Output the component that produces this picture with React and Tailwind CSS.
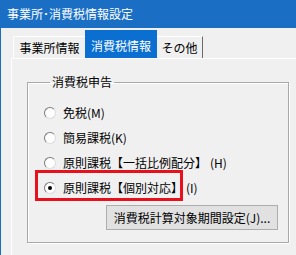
const Radio = ({ checked }) => (
  <span className="w-[12px] h-[12px] rounded-full bg-white border border-t-[#7a7a7a] border-l-[#7a7a7a] border-r-[#dcdcdc] border-b-[#dcdcdc] flex items-center justify-center shrink-0">
    {checked && <span className="w-[4px] h-[4px] rounded-full bg-black" />}
  </span>
);

const options = [
  { label: '免税(M)' },
  { label: '簡易課税(K)' },
  { label: '原則課税【一括比例配分】', key: '(H)' },
  { label: '原則課税【個別対応】', key: '(I)', checked: true, marked: true },
];

export default function App() {
  return (
    <div
      className="w-[296px] h-[255px] overflow-hidden bg-[#f0f0f0] border-l border-[#1a6fc4] text-black text-[12px] leading-[14px]"
      style={{ fontFamily: '"Noto Sans CJK JP", "Noto Sans", sans-serif' }}
    >
      {/* Title bar */}
      <div className="h-[28px] bg-[#1a6fc4] text-white flex items-center pl-[6px] text-[12px]">
        事業所･消費税情報設定
      </div>

      {/* Tabs */}
      <div className="flex items-end h-[30px] ml-[12px]">
        <div className="w-[72px] h-[22px] flex items-center justify-center border-t border-l border-white bg-[#f0f0f0]">
          事業所情報
        </div>
        <div className="w-[72px] h-[28px] flex items-end justify-center pb-[5px] bg-[#0a6fd0] text-white">
          消費税情報
        </div>
        <div className="w-[46px] h-[22px] flex items-center justify-center border-t border-white border-r border-r-[#696969] bg-[#f0f0f0]">
          その他
        </div>
      </div>

      {/* Tab panel */}
      <div className="ml-[10px] w-[400px] h-[300px] border-t border-l border-white pt-[16px] pl-[15px]">
        <fieldset className="w-[262px] border border-[#a9a9a9] pl-[15px] pr-0 pb-[12px] m-0 shadow-[1px_1px_0_#ffffff,inset_1px_1px_0_#ffffff]">
          <legend className="ml-[7px] px-[2px] leading-[14px]">消費税申告</legend>
          <div className="pt-[11px]">
            {options.map((o) => (
              <div key={o.label} className="relative h-[25px] flex items-center">
                {o.marked && (
                  <div className="absolute left-[-8px] top-[-5px] w-[148px] h-[31px] border-[3px] border-[#e8101a]" />
                )}
                <span className="ml-[1px]">
                  <Radio checked={o.checked} />
                </span>
                <span className="ml-[7px] whitespace-nowrap">{o.label}</span>
                {o.key && <span className="ml-[3px]">{o.key}</span>}
              </div>
            ))}
          </div>
          <button className="mt-[5px] ml-[63px] w-[172px] h-[25px] bg-[#e1e1e1] border border-[#adadad] flex items-center justify-center">
            消費税計算対象期間設定(J)...
          </button>
        </fieldset>
      </div>
    </div>
  );
}
